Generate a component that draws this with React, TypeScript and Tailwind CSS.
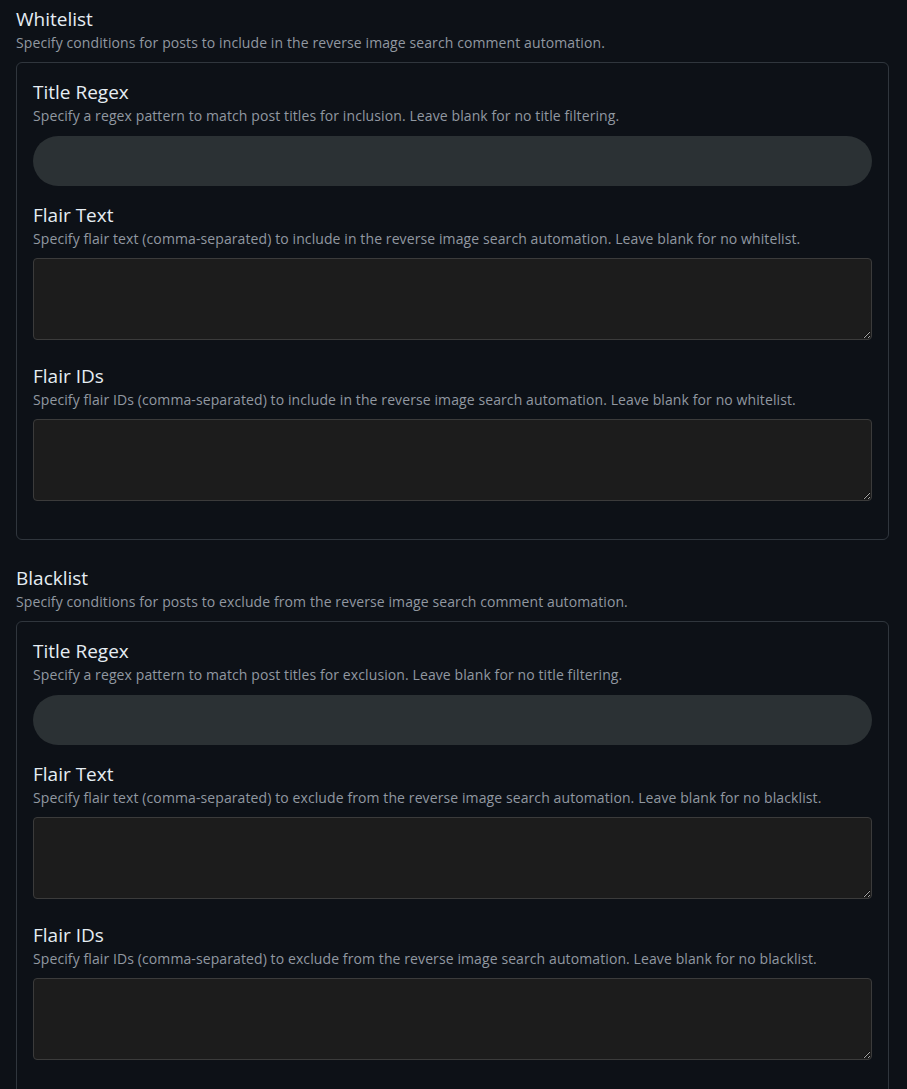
type Field = { title: string; desc: string; kind: 'input' | 'textarea' };

const sections: { title: string; desc: string; fields: Field[] }[] = [
  {
    title: 'Whitelist',
    desc: 'Specify conditions for posts to include in the reverse image search comment automation.',
    fields: [
      { title: 'Title Regex', desc: 'Specify a regex pattern to match post titles for inclusion. Leave blank for no title filtering.', kind: 'input' },
      { title: 'Flair Text', desc: 'Specify flair text (comma-separated) to include in the reverse image search automation. Leave blank for no whitelist.', kind: 'textarea' },
      { title: 'Flair IDs', desc: 'Specify flair IDs (comma-separated) to include in the reverse image search automation. Leave blank for no whitelist.', kind: 'textarea' },
    ],
  },
  {
    title: 'Blacklist',
    desc: 'Specify conditions for posts to exclude from the reverse image search comment automation.',
    fields: [
      { title: 'Title Regex', desc: 'Specify a regex pattern to match post titles for exclusion. Leave blank for no title filtering.', kind: 'input' },
      { title: 'Flair Text', desc: 'Specify flair text (comma-separated) to exclude from the reverse image search automation. Leave blank for no blacklist.', kind: 'textarea' },
      { title: 'Flair IDs', desc: 'Specify flair IDs (comma-separated) to exclude from the reverse image search automation. Leave blank for no blacklist.', kind: 'textarea' },
    ],
  },
];

export default function App() {
  return (
    <div className="min-h-screen bg-[#0d1117] pl-4 pr-[18px] pt-[5px] pb-8 [color-scheme:dark] font-['Open_Sans',sans-serif]">
      {sections.map((s) => (
        <section key={s.title} className="mb-6">
          <h2 className="text-[19px] leading-[28px] text-[#e6edf3]">{s.title}</h2>
          <p className="text-[14px] leading-[20px] tracking-[0.1px] text-[#9198a1]">{s.desc}</p>

          {/* ── Conditions box ── */}
          <div className="mt-[9px] rounded-md border border-[#30363d] px-4 pt-[15px] pb-4">
            {s.fields.map((f) => (
              <div key={f.title} className={f.kind === 'input' ? 'mb-[15px]' : 'mb-[22px]'}>
                <h3 className="text-[19px] leading-[28px] text-[#e6edf3]">{f.title}</h3>
                <p className="text-[14px] leading-[20px] tracking-[0.1px] text-[#9198a1]">{f.desc}</p>
                {f.kind === 'input' ? (
                  <input className="mt-2.5 block h-[50px] w-full rounded-full bg-[#2b3134] px-5 text-[#e6edf3] outline-none" />
                ) : (
                  <textarea className="mt-[9px] block h-[82px] w-full rounded-[4px] border border-[#3b3b3b] bg-[#1c1c1c] p-2 text-[#e6edf3] outline-none" />
                )}
              </div>
            ))}
          </div>
        </section>
      ))}
    </div>
  );
}
